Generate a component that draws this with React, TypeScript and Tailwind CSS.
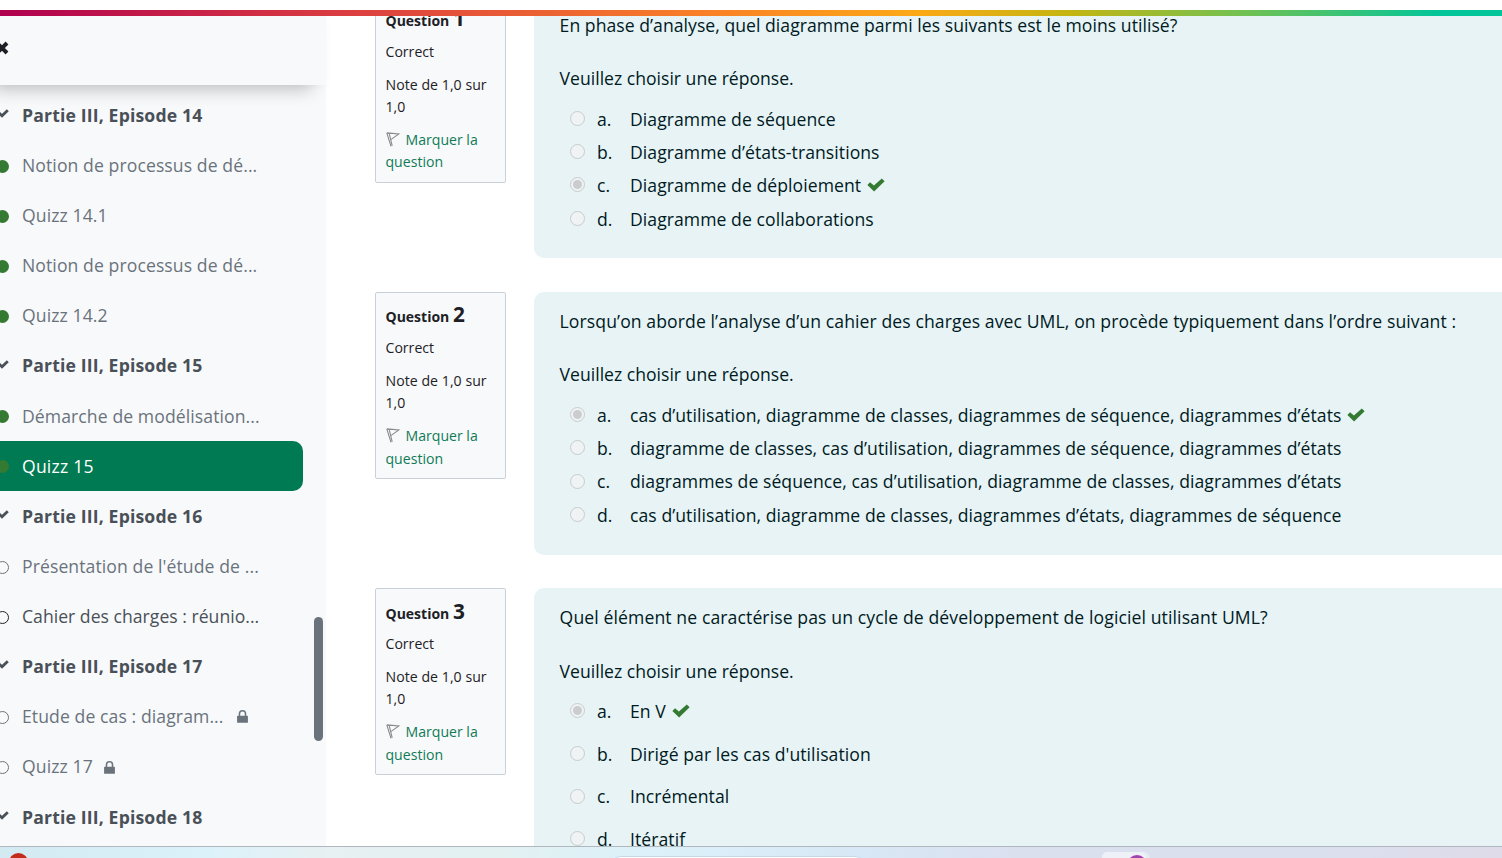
type Status = "section" | "done" | "todo" | "todo-dark" | "active";
type Item = { label: string; status: Status; locked?: boolean };

const items: Item[] = [
  { label: "Partie III, Episode 14", status: "section" },
  { label: "Notion de processus de dé...", status: "done" },
  { label: "Quizz 14.1", status: "done" },
  { label: "Notion de processus de dé...", status: "done" },
  { label: "Quizz 14.2", status: "done" },
  { label: "Partie III, Episode 15", status: "section" },
  { label: "Démarche de modélisation...", status: "done" },
  { label: "Quizz 15", status: "active" },
  { label: "Partie III, Episode 16", status: "section" },
  { label: "Présentation de l'étude de ...", status: "todo" },
  { label: "Cahier des charges : réunio...", status: "todo-dark" },
  { label: "Partie III, Episode 17", status: "section" },
  { label: "Etude de cas : diagram...", status: "todo", locked: true },
  { label: "Quizz 17", status: "todo", locked: true },
  { label: "Partie III, Episode 18", status: "section" },
];

const labelStyle: Record<Status, string> = {
  section: "font-bold tracking-[0.16px] text-[#495057]",
  done: "tracking-[0.09px] text-[#6a737b]",
  todo: "tracking-[0.09px] text-[#6a737b]",
  "todo-dark": "tracking-[0.02px] text-[#495057]",
  active: "tracking-[0.2px] text-white",
};

function Chevron() {
  return (
    <svg width="14" height="14" viewBox="0 0 14 14" className="-mt-1 ml-[-5px]">
      <path d="M1.5 4.5 7 9.7 12.8 4.2" fill="none" stroke="#495057" strokeWidth="2.8" />
    </svg>
  );
}

function Marker({ status }: { status: Status }) {
  if (status === "section") return <Chevron />;
  if (status === "done" || status === "active")
    return <span className="mt-0.5 -ml-1 size-[13px] rounded-full bg-[#357a32]" />;
  return (
    <span
      className={
        status === "todo"
          ? "mt-0.5 -ml-1 size-[13px] rounded-full border border-[#6a737b]"
          : "mt-0.5 -ml-1 size-[13px] rounded-full border border-[#1d2125]"
      }
    />
  );
}

function Lock() {
  return (
    <svg width="11" height="13" viewBox="0 0 10 12" className="mt-px">
      <path d="M2.2 6V3.5a2.8 2.8 0 0 1 5.6 0V6" fill="none" stroke="#6a737b" strokeWidth="1.4" />
      <rect y="5.4" width="10" height="6.4" rx="0.6" fill="#6a737b" />
    </svg>
  );
}

function Tick() {
  return (
    <svg width="18" height="14" viewBox="0 0 18 14" className="ml-1.5">
      <path d="M0.4 6.9 3 4.3 6.9 7.6 14.8 0.6 17.6 3.2 7.1 13.4Z" fill="#357a32" />
    </svg>
  );
}

function Flag() {
  return (
    <svg width="14" height="15" viewBox="0 0 14 15" className="mr-1.5 inline-block align-[-2px]">
      <path
        d="M0.8 0.9 5 14.3 M0.8 0.9 12.8 2 5.2 7.4 M3.2 1.6 6.2 13.8"
        fill="none"
        stroke="#8a8a8a"
        strokeWidth="1.1"
      />
    </svg>
  );
}

function Sidebar() {
  return (
    <aside className="relative w-[326px] shrink-0 bg-[#f8f9fb]">
      <div className="flex h-[69px] items-center bg-[#f8f9fb] shadow-[-10px_9px_16px_-4px_rgba(0,0,0,0.22),0_0_8px_rgba(0,0,0,0.03)]">
        <svg width="14" height="14" viewBox="0 0 14 14" className="mt-[-6px] ml-[-5px]">
          <path d="M2 2 12 12 M12 2 2 12" stroke="#1d2125" strokeWidth="4" />
        </svg>
      </div>
      <nav className="pt-[4.9px]">
        {items.map((item, i) => (
          <div
            key={i}
            className={
              item.status === "active"
                ? "flex h-[50.14px] w-[303px] items-center rounded-r-[10px] bg-[#007a52]"
                : "flex h-[50.14px] w-[303px] items-center"
            }
          >
            <span className="flex w-[22px] shrink-0 items-center">
              <Marker status={item.status} />
            </span>
            <span className={labelStyle[item.status]}>{item.label}</span>
            {item.locked && (
              <span className={item.label === "Quizz 17" ? "ml-[11px]" : "ml-[13px]"}>
                <Lock />
              </span>
            )}
          </div>
        ))}
      </nav>
      <div className="absolute top-[601px] left-[314px] h-[124px] w-[9px] rounded-full bg-[#6a737b]" />
    </aside>
  );
}

function Info({ n }: { n: number }) {
  return (
    <div className="h-[187.4px] w-[131px] shrink-0 rounded-[2px] border border-[#cad0d7] bg-[#f8f9fb] pl-[9.5px] text-[14.1px] leading-[22.4px] text-[#1d2125]">
      <div className="mt-[8.5px] h-[27px] text-[14px] leading-[27px] font-bold">
        Question <span className="text-[20.8px]">{n}</span>
      </div>
      <div className="mt-[8.3px]">Correct</div>
      <div className="mt-[10.6px] tracking-[0.05px]">
        Note de 1,0 sur
        <br />
        1,0
      </div>
      <div className="mt-[10.7px] text-[#0f7b57]">
        <Flag />
        Marquer la
        <br />
        question
      </div>
    </div>
  );
}

function Radio({ checked }: { checked?: boolean }) {
  return (
    <span className="-mt-px flex size-[15px] shrink-0 items-center justify-center rounded-full border border-[#c8cccd] bg-[#f0f3f4]">
      {checked && <span className="size-[9px] rounded-full bg-[#cbcccd]" />}
    </span>
  );
}

type QuestionProps = {
  n: number;
  title: string;
  titleClass: string;
  answers: string[];
  correct: number;
  loose?: boolean;
};

function Question({ n, title, titleClass, answers, correct, loose }: QuestionProps) {
  return (
    <section className="flex h-[296.2px] shrink-0 items-start gap-7">
      <Info n={n} />
      <div
        className={
          loose
            ? "h-[320px] flex-1 rounded-l-[10px] bg-[#e7f3f5] pt-[15px] pl-[25.6px]"
            : "h-[262.7px] flex-1 rounded-l-[10px] bg-[#e7f3f5] pt-[15px] pl-[25.6px]"
        }
      >
        <p className={titleClass}>{title}</p>
        <p className={loose ? "mt-[26px] h-7 leading-7" : "mt-[25.4px] h-7 leading-7"}>
          Veuillez choisir une réponse.
        </p>
        <div className={loose ? "mt-[5px] pl-[10.4px]" : "mt-[10.1px] pl-[10.4px]"}>
          {answers.map((a, i) => (
            <div
              key={a}
              className={loose ? "flex h-[42.6px] items-center" : "flex h-[33.3px] items-center"}
            >
              <Radio checked={i === correct} />
              <span className="ml-3 w-[33px] shrink-0">{"abcd"[i]}.</span>
              <span className="tracking-[0.06px] whitespace-nowrap">{a}</span>
              {i === correct && <Tick />}
            </div>
          ))}
        </div>
      </div>
    </section>
  );
}

function Taskbar() {
  return (
    <footer className="relative h-3 shrink-0 overflow-hidden border-t border-[#b1b8bd] bg-linear-[90deg,#d3eaf2_0%,#dcf2fa_14%,#e7f0f2_22%,#e3f1f1_33%,#dcf1fa_43%,#d8e8f6_57%,#dbe0ef_68%,#dbe0ef_88%,#dfdbe9_100%]">
      <span className="absolute top-[6px] left-[9px] size-[19px] rounded-full bg-[#c42b1c]" />
      <span className="absolute top-[9px] left-[609px] h-8 w-[258px] rounded-[12px] border border-[#c5d9e8] bg-white" />
      <span className="absolute top-[5px] left-[1108px] h-8 w-[42px] rounded-[5px] border border-[#e2e5f2] bg-[#e8ebf6]" />
      <span className="absolute top-[5px] left-[1102px] h-8 w-[44px] rounded-[5px] bg-[#eff1f9]" />
      <span className="absolute top-[8px] left-[1127px] size-[20px] rounded-full bg-[#a044b0]" />
    </footer>
  );
}

export default function App() {
  return (
    <div className="flex h-[858px] w-[1502px] flex-col overflow-hidden bg-white font-['Open_Sans','Noto_Sans',sans-serif] text-[17.6px] text-[#001a1e]">
      <div className="mt-2.5 h-1.5 shrink-0 bg-linear-[90deg,#b0004f_0%,#dc4040_24%,#f98027_47%,#fca916_61%,#c5b511_71%,#70c153_83%,#00c59a_96%]" />
      <div className="flex min-h-0 flex-1 overflow-hidden">
        <Sidebar />
        <main className="flex-1 overflow-hidden pl-[49px]">
          <div className="mt-[-20.3px] flex flex-col">
            <Question
              n={1}
              title="En phase d’analyse, quel diagramme parmi les suivants est le moins utilisé?"
              titleClass="h-7 leading-7 tracking-[0.04px] whitespace-nowrap"
              answers={[
                "Diagramme de séquence",
                "Diagramme d’états-transitions",
                "Diagramme de déploiement",
                "Diagramme de collaborations",
              ]}
              correct={2}
            />
            <Question
              n={2}
              title="Lorsqu’on aborde l’analyse d’un cahier des charges avec UML, on procède typiquement dans l’ordre suivant :"
              titleClass="h-7 leading-7 tracking-[0.095px] whitespace-nowrap"
              answers={[
                "cas d’utilisation, diagramme de classes, diagrammes de séquence, diagrammes d’états",
                "diagramme de classes, cas d’utilisation, diagrammes de séquence, diagrammes d’états",
                "diagrammes de séquence, cas d’utilisation, diagramme de classes, diagrammes d’états",
                "cas d’utilisation, diagramme de classes, diagrammes d’états, diagrammes de séquence",
              ]}
              correct={0}
            />
            <Question
              n={3}
              title="Quel élément ne caractérise pas un cycle de développement de logiciel utilisant UML?"
              titleClass="h-7 leading-7 tracking-[0.105px] whitespace-nowrap"
              answers={["En V", "Dirigé par les cas d'utilisation", "Incrémental", "Itératif"]}
              correct={0}
              loose
            />
          </div>
        </main>
      </div>
      <Taskbar />
    </div>
  );
}
